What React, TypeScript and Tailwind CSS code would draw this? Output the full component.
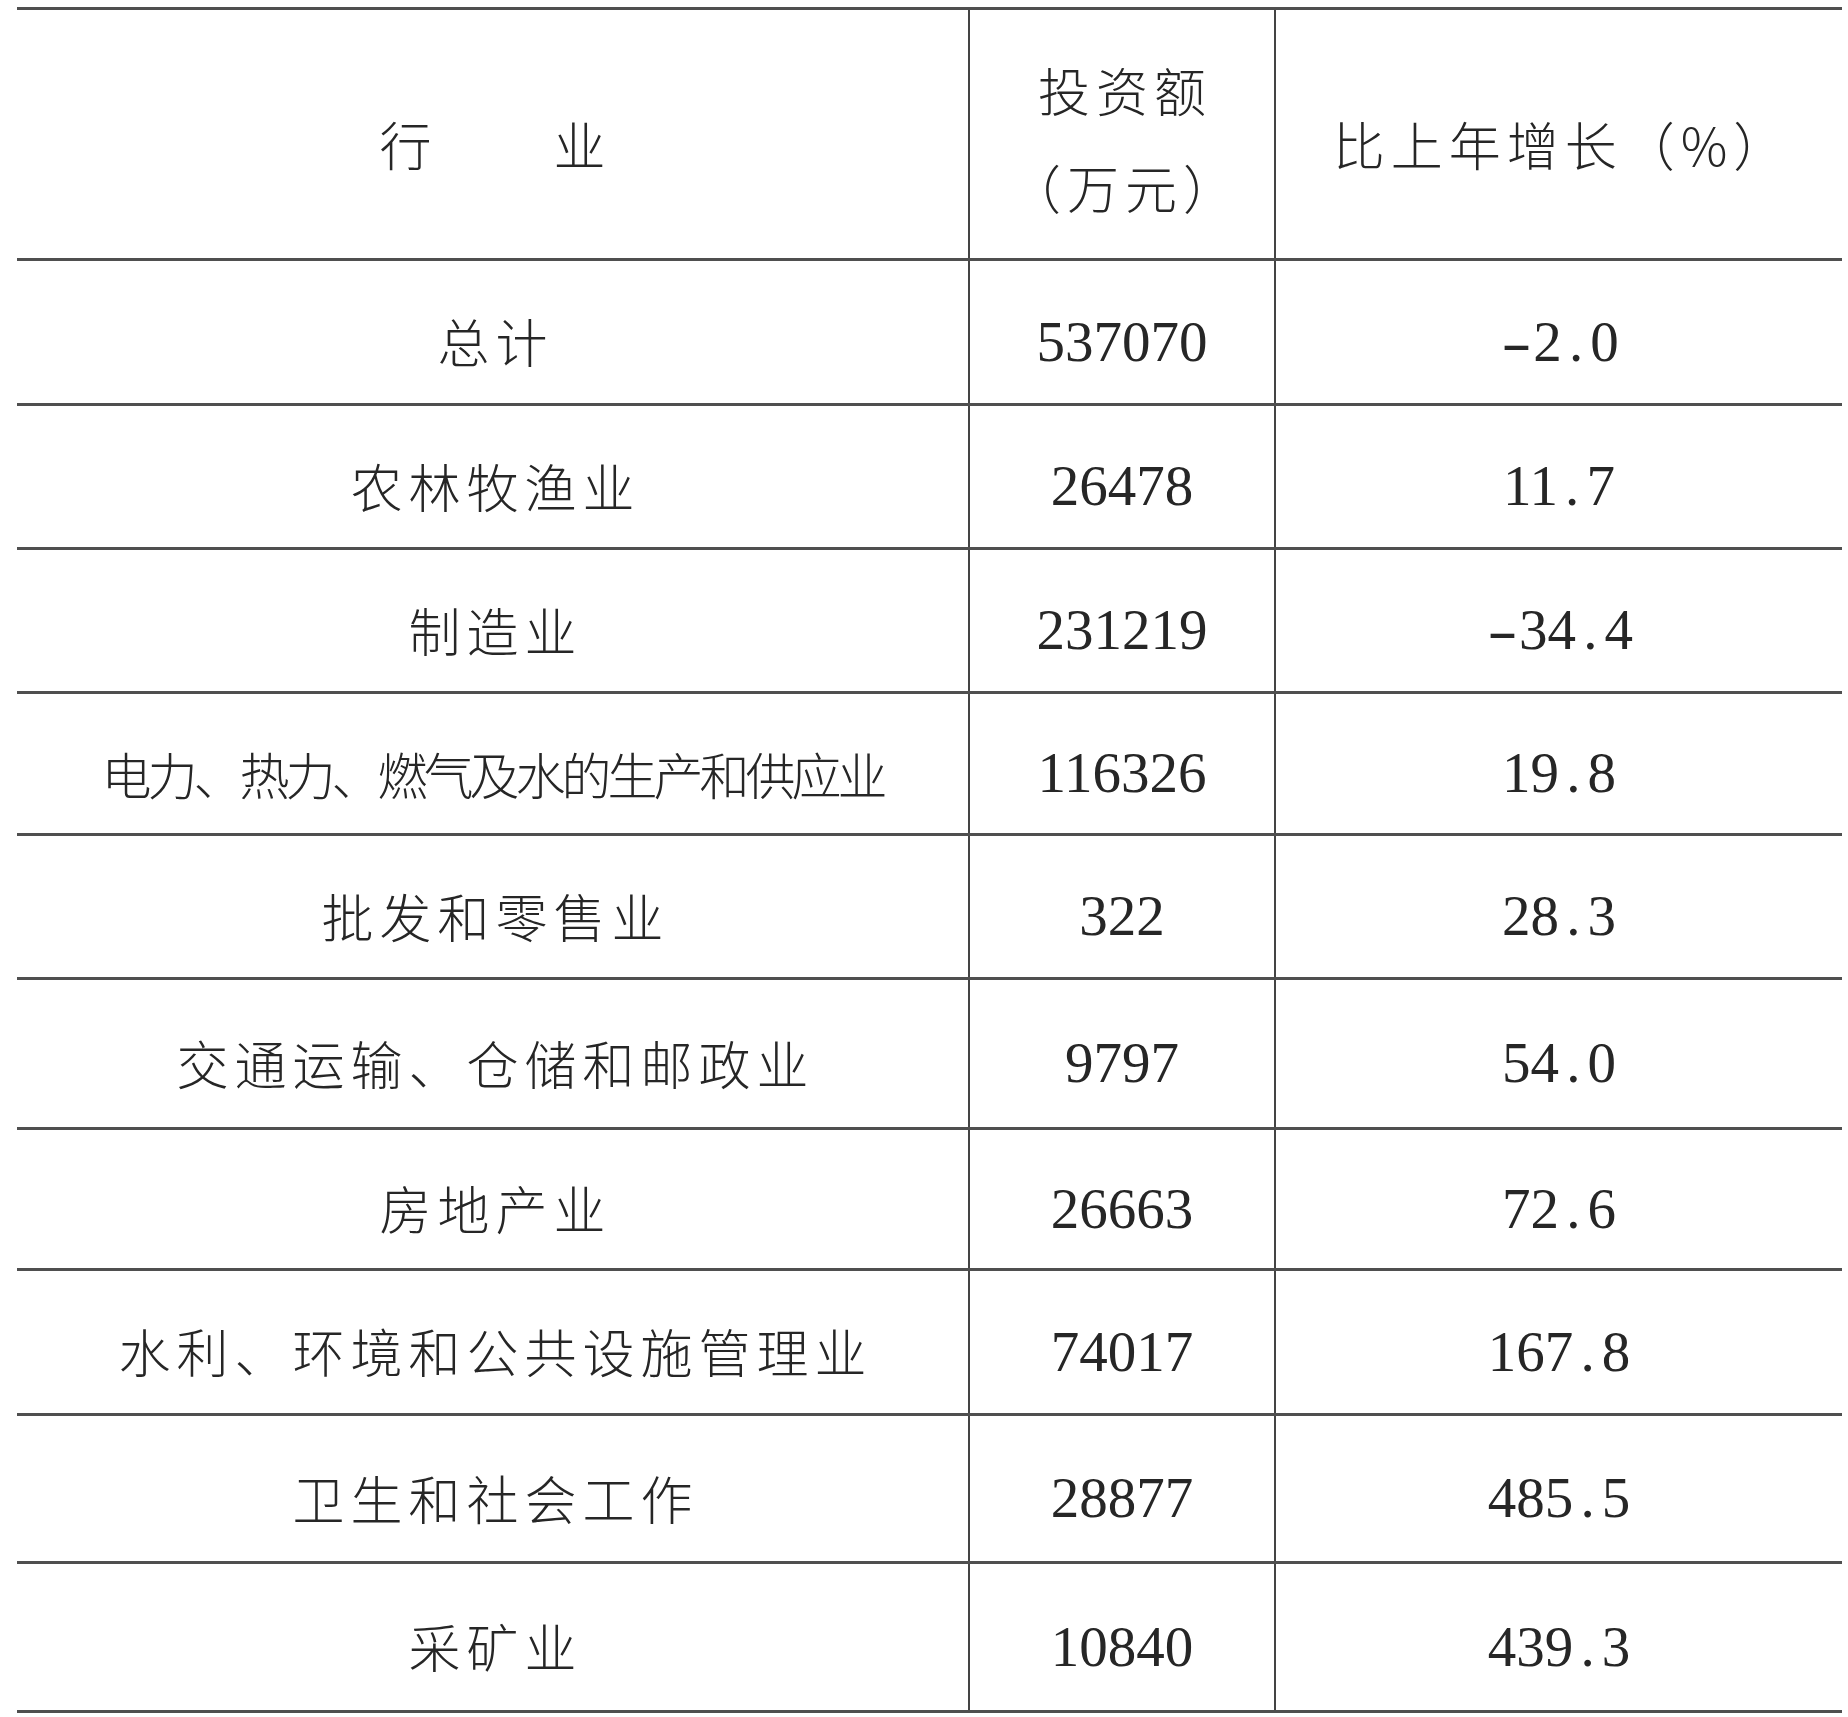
import React from "react";

const rows: { name: string; amount: string; growth: string; h: string; tight?: boolean }[] = [
  { name: "总计", amount: "537070", growth: "-2.0", h: "h-[145px]" },
  { name: "农林牧渔业", amount: "26478", growth: "11.7", h: "h-[144px]" },
  { name: "制造业", amount: "231219", growth: "-34.4", h: "h-[144px]" },
  { name: "电力、热力、燃气及水的生产和供应业", amount: "116326", growth: "19.8", h: "h-[142px]", tight: true },
  { name: "批发和零售业", amount: "322", growth: "28.3", h: "h-[144px]" },
  { name: "交通运输、仓储和邮政业", amount: "9797", growth: "54.0", h: "h-[150px]" },
  { name: "房地产业", amount: "26663", growth: "72.6", h: "h-[141px]" },
  { name: "水利、环境和公共设施管理业", amount: "74017", growth: "167.8", h: "h-[145px]" },
  { name: "卫生和社会工作", amount: "28877", growth: "485.5", h: "h-[148px]" },
  { name: "采矿业", amount: "10840", growth: "439.3", h: "h-[149px]" },
];

const cjk = "font-['Noto_Sans_CJK_SC','Noto_Sans_CJK_JP',sans-serif] font-light text-[52px] leading-none text-[#262626]";
const cjkTight = "font-['Noto_Sans_CJK_SC','Noto_Sans_CJK_JP',sans-serif] font-light text-[50px] leading-none text-[#262626]";
const num = "font-['Liberation_Serif','Times_New_Roman',serif] text-[57px] leading-none text-[#262626]";

function Num({ v }: { v: string }) {
  return (
    <span className={num}>
      {v.split("").map((c, i) => {
        if (c === ".")
          return (
            <span key={i} className="inline-block w-[0.5em] text-center">
              .
            </span>
          );
        if (c === "-")
          return (
            <span key={i} className="inline-block w-[0.6em] text-center">
              <span className="inline-block scale-x-[1.6] font-light">-</span>
            </span>
          );
        return <span key={i}>{c}</span>;
      })}
    </span>
  );
}

function Row({ r }: { r: (typeof rows)[number] }) {
  return (
    <div className={`grid grid-cols-[951px_306px_1fr] border-b-[3px] border-[#4f4f4f] ${r.h}`}>
      <div className="flex items-center justify-center pt-[18px]">
        {r.tight ? (
          <span className={`${cjkTight} tracking-[-4px]`}>{r.name}</span>
        ) : (
          <span className={`${cjk} tracking-[6px] -mr-[6px]`}>{r.name}</span>
        )}
      </div>
      <div className="flex items-center justify-center pt-[18px] border-l-2 border-[#444]">
        <Num v={r.amount} />
      </div>
      <div className="flex items-center justify-center pt-[18px] border-l-2 border-[#444]">
        <Num v={r.growth} />
      </div>
    </div>
  );
}

export default function App() {
  return (
    <div className="w-[1848px] h-[1717px] bg-white overflow-hidden">
      <div className="ml-[17px] mt-[7px] w-[1825px] border-t-[3px] border-[#4f4f4f]">
        <div className="grid grid-cols-[951px_306px_1fr] h-[251px] border-b-[3px] border-[#4f4f4f]">
          <div className="flex items-center justify-center pt-[20px]">
            <span className={`${cjk} tracking-[6px] -mr-[6px] whitespace-pre`}>行　　业</span>
          </div>
          <div className="flex flex-col items-center justify-center pt-[8px] gap-[45px] border-l-2 border-[#444]">
            <span className={`${cjk} tracking-[6px] -mr-[6px]`}>投资额</span>
            <span className={`${cjk} tracking-[6px] -mr-[6px]`}>（万元）</span>
          </div>
          <div className="flex items-center justify-center pt-[20px] border-l-2 border-[#444]">
            <span className={`${cjk} tracking-[6px] -mr-[6px]`}>比上年增长（%）</span>
          </div>
        </div>
        {rows.map((r) => (
          <Row key={r.name} r={r} />
        ))}
      </div>
    </div>
  );
}
